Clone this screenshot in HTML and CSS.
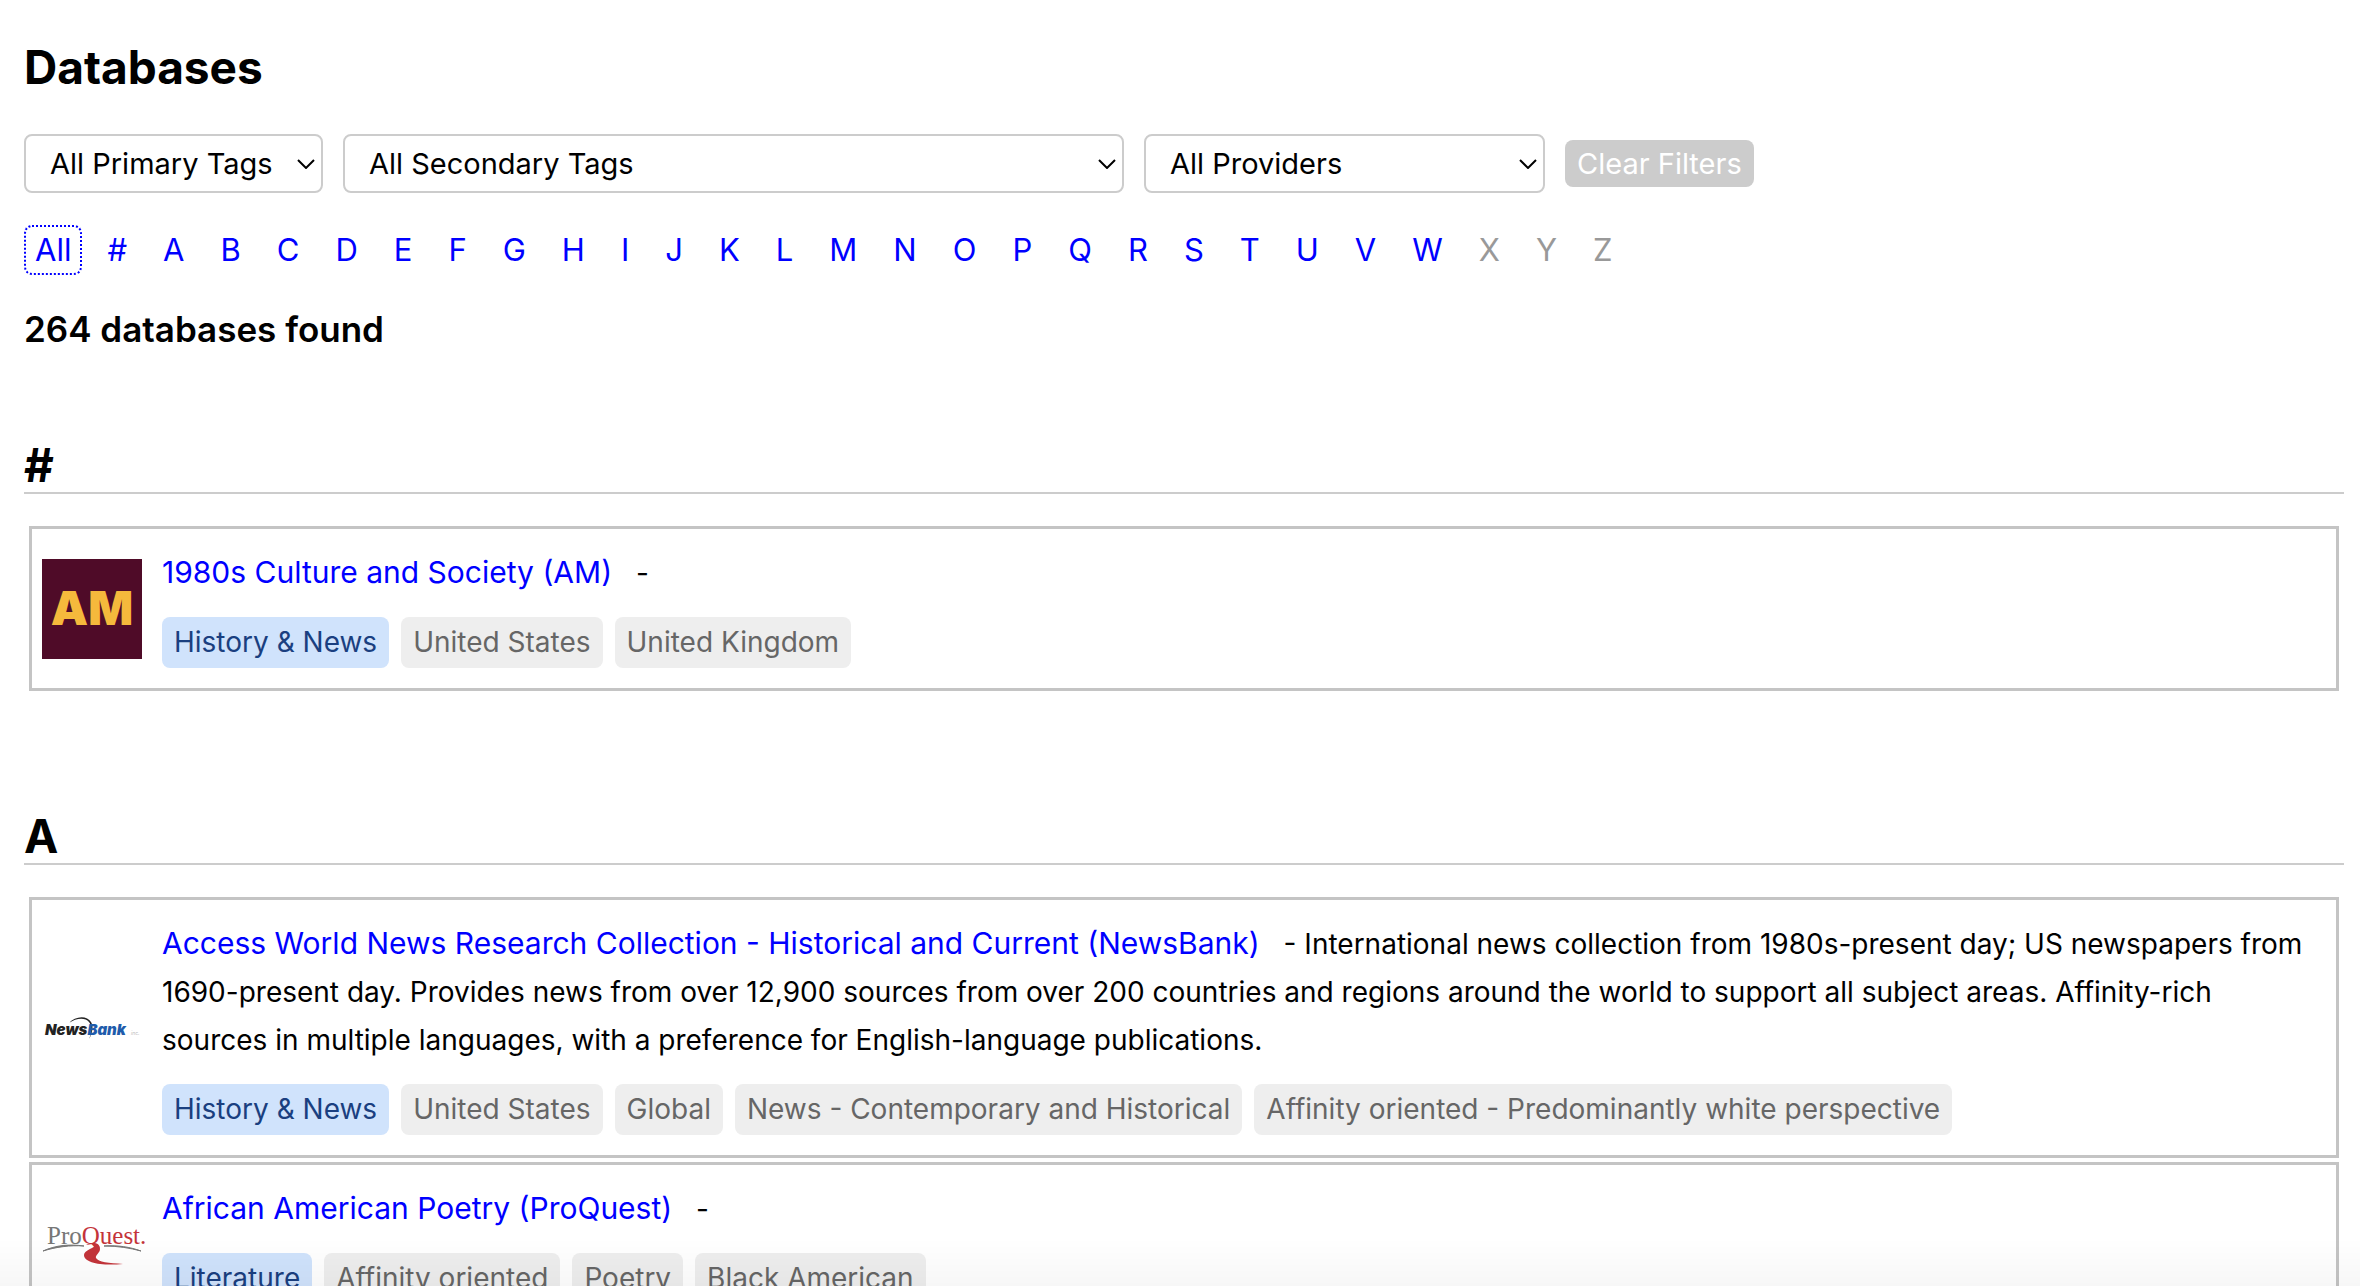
FILE: index.html
```html
<!DOCTYPE html>
<html lang="en">
<head>
<meta charset="utf-8">
<meta name="viewport" content="width=device-width, initial-scale=1">
<title>Databases</title>
<link rel="stylesheet" href="styles.css">
</head>
<body>
<main class="page">
  <h1 class="page-title">Databases</h1>

  <form class="filters">
    <div class="picker picker-primary">
      <select aria-label="Primary tags"><option>All Primary Tags</option></select>
      <svg class="chevron" viewBox="0 0 18 10" aria-hidden="true"><path d="M1 1l8 8 8-8"/></svg>
    </div>
    <div class="picker picker-secondary">
      <select aria-label="Secondary tags"><option>All Secondary Tags</option></select>
      <svg class="chevron" viewBox="0 0 18 10" aria-hidden="true"><path d="M1 1l8 8 8-8"/></svg>
    </div>
    <div class="picker picker-provider">
      <select aria-label="Providers"><option>All Providers</option></select>
      <svg class="chevron" viewBox="0 0 18 10" aria-hidden="true"><path d="M1 1l8 8 8-8"/></svg>
    </div>
    <button class="clear" type="button" disabled>Clear Filters</button>
  </form>

  <nav class="letters" aria-label="Filter by letter">
    <a class="letter current" href="#all">All</a>
    <a class="letter" href="#num">#</a>
    <a class="letter" href="#a">A</a>
    <a class="letter" href="#b">B</a>
    <a class="letter" href="#c">C</a>
    <a class="letter" href="#d">D</a>
    <a class="letter" href="#e">E</a>
    <a class="letter" href="#f">F</a>
    <a class="letter" href="#g">G</a>
    <a class="letter" href="#h">H</a>
    <a class="letter" href="#i">I</a>
    <a class="letter" href="#j">J</a>
    <a class="letter" href="#k">K</a>
    <a class="letter" href="#l">L</a>
    <a class="letter" href="#m">M</a>
    <a class="letter" href="#n">N</a>
    <a class="letter" href="#o">O</a>
    <a class="letter" href="#p">P</a>
    <a class="letter" href="#q">Q</a>
    <a class="letter" href="#r">R</a>
    <a class="letter" href="#s">S</a>
    <a class="letter" href="#t">T</a>
    <a class="letter" href="#u">U</a>
    <a class="letter" href="#v">V</a>
    <a class="letter" href="#w">W</a>
    <span class="letter empty">X</span>
    <span class="letter empty">Y</span>
    <span class="letter empty">Z</span>
  </nav>

  <p class="count">264 databases found</p>

  <section class="group" id="num">
    <h2 class="group-title">#</h2>
    <div class="cards">
      <article class="card">
        <svg class="logo" viewBox="0 0 100 100" role="img" aria-label="AM">
          <rect width="100" height="100" fill="#4f0b28"/>
          <text class="am-text" x="50" y="66" text-anchor="middle">AM</text>
        </svg>
        <div class="info">
          <p class="summary"><a class="name" href="#am">1980s Culture and Society (AM)</a> -</p>
          <ul class="tags">
            <li class="tag primary">History &amp; News</li>
            <li class="tag">United States</li>
            <li class="tag">United Kingdom</li>
          </ul>
        </div>
      </article>
    </div>
  </section>

  <section class="group" id="a">
    <h2 class="group-title">A</h2>
    <div class="cards">
      <article class="card">
        <svg class="logo" viewBox="0 0 100 24" role="img" aria-label="NewsBank">
          <path d="M27 7C33 0 45 -1 49 6C52 11 50 18 47 23C50 16 50 10 47 6C43 1 34 2 27 7Z" fill="#222"/>
          <text class="newsbank-text" x="3" y="19">News<tspan fill="#1f5cab">Bank</tspan></text>
          <text class="newsbank-inc" x="89" y="19">inc.</text>
        </svg>
        <div class="info">
          <p class="summary"><a class="name" href="#newsbank">Access World News Research Collection - Historical and Current (NewsBank)</a> - International news collection from 1980s-present day; US newspapers from 1690-present day. Provides news from over 12,900 sources from over 200 countries and regions around the world to support all subject areas. Affinity-rich sources in multiple languages, with a preference for English-language publications.</p>
          <ul class="tags">
            <li class="tag primary">History &amp; News</li>
            <li class="tag">United States</li>
            <li class="tag">Global</li>
            <li class="tag">News - Contemporary and Historical</li>
            <li class="tag">Affinity oriented - Predominantly white perspective</li>
          </ul>
        </div>
      </article>
      <article class="card">
        <svg class="logo" viewBox="0 0 100 40" role="img" aria-label="ProQuest">
          <path d="M1 26C14 20 28 19 42 21C28 20 14 22 1 26Z" fill="#777" stroke="#777"/>
          <path d="M62 21C76 20 88 22 99 26C88 23 76 21 62 21Z" fill="#777" stroke="#777"/>
          <text class="proquest-text" x="5" y="19">Pro<tspan fill="#c4343a">Quest.</tspan></text>
          <path d="M44 20C50 17 58 17 58 24C58 28 53 30 54 33C56 37 67 38 81 39C60 41 42 38 42 30C42 25 53 23 53 20C51 19 49 19 44 20Z" fill="#c4343a"/>
        </svg>
        <div class="info">
          <p class="summary"><a class="name" href="#proquest">African American Poetry (ProQuest)</a> -</p>
          <ul class="tags">
            <li class="tag primary">Literature</li>
            <li class="tag">Affinity oriented</li>
            <li class="tag">Poetry</li>
            <li class="tag">Black American</li>
          </ul>
        </div>
      </article>
    </div>
  </section>
</main>
<div class="bottom-fade"></div>
</body>
</html>
```
FILE: styles.css
```css
* {
  box-sizing: border-box;
}

html {
  scrollbar-width: none;
}

body {
  margin: 0;
  background: #fff;
  color: #000;
  font-family: Inter, "Liberation Sans", sans-serif;
  font-size: 28px;
}

h1, h2, p, ul {
  margin: 0;
}

.page {
  padding: 39px 16px 24px 24px;
}

.page-title {
  font-size: 46px;
  line-height: 56px;
  font-weight: 700;
}

.filters {
  display: flex;
  flex-wrap: wrap;
  align-items: center;
  gap: 20px;
  margin-top: 39px;
}

.picker {
  position: relative;
}

.picker-primary {
  width: 299px;
}

.picker-secondary {
  width: 781px;
}

.picker-provider {
  width: 401px;
}

.picker select {
  display: block;
  width: 100%;
  height: 59px;
  padding: 0 40px 0 24px;
  border: 2px solid #ccc;
  border-radius: 8px;
  background: #fff;
  color: #000;
  font: inherit;
  font-size: 29px;
  appearance: none;
}

.chevron {
  position: absolute;
  right: 8px;
  top: 25px;
  width: 18px;
  height: 10px;
  fill: none;
  stroke: #000;
  stroke-width: 2;
  pointer-events: none;
}

.clear {
  height: 47px;
  padding: 0 12px;
  border: 0;
  border-radius: 8px;
  background: #ccc;
  color: #fff;
  font: inherit;
  font-size: 29px;
}

.letters {
  display: flex;
  flex-wrap: wrap;
  gap: 14px;
  margin-top: 32px;
}

.letter {
  padding: 0 9px;
  border: 2px solid transparent;
  border-radius: 8px;
  color: #00f;
  font-size: 31px;
  line-height: 46px;
  text-decoration: none;
}

.letter.current {
  border: 2px dotted #00f;
}

.letter.empty {
  color: #999;
}

.count {
  margin-top: 33px;
  font-size: 35px;
  line-height: 42px;
  font-weight: 600;
}

.group {
  margin-top: 118px;
}

.count + .group {
  margin-top: 88px;
}

.group-title {
  border-bottom: 2px solid #ccc;
  font-size: 46px;
  line-height: 54px;
  font-weight: 700;
}

.cards {
  display: flex;
  flex-direction: column;
  gap: 4px;
  margin: 32px 5px 0;
}

.card {
  display: flex;
  align-items: center;
  gap: 20px;
  padding: 20px 24px 20px 10px;
  border: 3px solid #c4c4c4;
}

.logo {
  flex: none;
  width: 100px;
  overflow: visible;
}

.info {
  flex: 1;
  min-width: 0;
}

.summary {
  line-height: 48px;
}

.name {
  margin-right: 16px;
  color: #00f;
  font-size: 30px;
  line-height: 30px;
  text-decoration: none;
}

.tags {
  display: flex;
  flex-wrap: wrap;
  gap: 12px;
  margin-top: 20px;
  padding: 0;
  list-style: none;
}

.tag {
  padding: 0 12px;
  border-radius: 8px;
  background: #eee;
  color: #666;
  line-height: 51px;
}

.tag.primary {
  background: #d0e3fc;
  color: #1a3f80;
}

.am-text {
  fill: #f5b93c;
  font: 900 47px Inter, sans-serif;
}

.newsbank-text {
  fill: #222;
  font: italic 900 15px Inter, sans-serif;
}

.newsbank-inc {
  fill: #bbb;
  font: italic 5px Inter, sans-serif;
}

.proquest-text {
  fill: #777;
  font: 25px "Liberation Serif", serif;
}

.bottom-fade {
  position: fixed;
  right: 0;
  bottom: 0;
  left: 0;
  height: 48px;
  background: linear-gradient(rgba(0, 0, 0, 0), rgba(0, 0, 0, 0.03));
  pointer-events: none;
}
```
